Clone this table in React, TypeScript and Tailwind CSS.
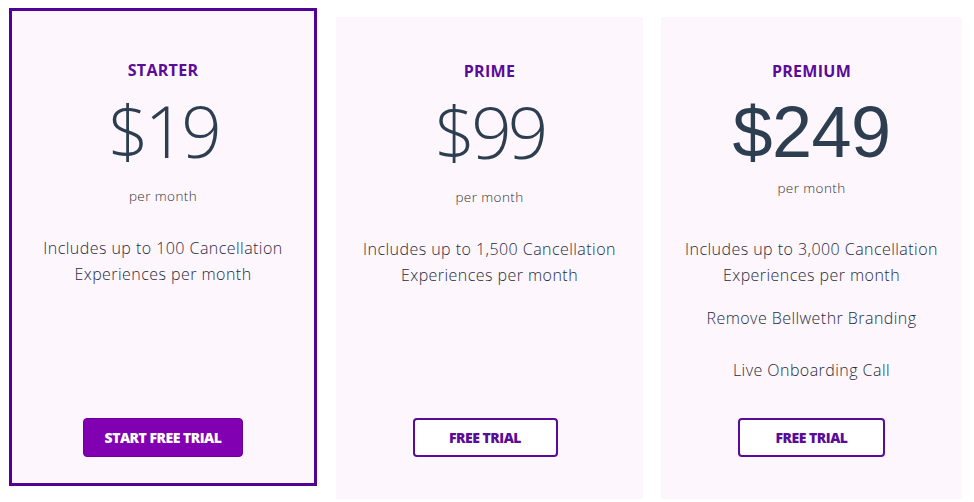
const features = {
  starter: ["Includes up to 100 Cancellation", "Experiences per month"],
  prime: ["Includes up to 1,500 Cancellation", "Experiences per month"],
  premium: ["Includes up to 3,000 Cancellation", "Experiences per month"],
};

function Title({ children }: { children: string }) {
  return (
    <h3 className="text-[16px] leading-[20px] font-bold tracking-[0.3px] text-[#5a0b97] uppercase">
      {children}
    </h3>
  );
}

function Price({ value, className = "" }: { value: string; className?: string }) {
  return (
    <div className={`text-[71px] leading-[80px] font-light text-[#2c3e50] tracking-[-4px] ${className}`}>
      {value}
    </div>
  );
}

function Lines({ lines }: { lines: string[] }) {
  return (
    <p className="text-[16px] leading-[26px] font-light tracking-[0.45px] text-[#1f2b3c]">
      {lines.map((l) => (
        <span key={l} className="block">
          {l}
        </span>
      ))}
    </p>
  );
}

function PerMonth({ className = "" }: { className?: string }) {
  return (
    <div className={`text-[13.5px] leading-[18px] font-light tracking-[0.4px] text-[#333333] ${className}`}>
      per month
    </div>
  );
}

export default function App() {
  return (
    <div
      className="w-[974px] h-[502px] bg-white flex items-start pl-[9px] pt-[8px] overflow-hidden"
      style={{ fontFamily: '"Open Sans", Lato, "Liberation Sans", sans-serif' }}
    >
      {/* Starter - highlighted */}
      <div className="w-[308px] h-[478px] border-[3px] border-[#520095] bg-[#fdf7fd] flex flex-col items-center text-center pt-[49px] pb-[26px]">
        <Title>Starter</Title>
        <Price value="$19" className="mt-[11px]" />
        <PerMonth className="mt-[16px]" />
        <div className="mt-[30px]">
          <Lines lines={features.starter} />
        </div>
        <button className="mt-auto w-[160px] h-[39px] rounded-[4px] bg-[#8000b2] border border-[#6a0096] text-white text-[14px] font-extrabold uppercase tracking-[-0.5px]">
          Start Free Trial
        </button>
      </div>

      {/* Prime */}
      <div className="ml-[19px] mt-[9px] w-[307px] h-[482px] bg-[#fdf7fd] flex flex-col items-center text-center pt-[44px] pb-[42px]">
        <Title>Prime</Title>
        <Price value="$99" className="mt-[11px]" />
        <PerMonth className="mt-[16px]" />
        <div className="mt-[30px]">
          <Lines lines={features.prime} />
        </div>
        <button className="mt-auto mr-[9px] w-[145px] h-[39px] rounded-[4px] bg-white border-2 border-[#5a0b97] text-[#5a0b97] text-[14px] font-extrabold uppercase tracking-[-0.5px]">
          Free Trial
        </button>
      </div>

      {/* Premium */}
      <div className="ml-[18px] mt-[9px] w-[301px] h-[482px] bg-[#fdf7fd] flex flex-col items-center text-center pt-[44px] pb-[42px]">
        <Title>Premium</Title>
        <div
          className="mt-[11px] text-[72px] leading-[80px] text-[#2c3e50] tracking-[-0.5px]"
          style={{ fontFamily: '"Liberation Sans", Arial, sans-serif' }}
        >
          $249
        </div>
        <PerMonth className="mt-[7px]" />
        <div className="mt-[39px]">
          <Lines lines={features.premium} />
        </div>
        <p className="mt-[17px] text-[16px] leading-[26px] font-light tracking-[0.45px] text-[#1f2b3c]">Remove Bellwethr Branding</p>
        <p className="mt-[26px] text-[16px] leading-[26px] font-light tracking-[0.45px] text-[#1f2b3c]">Live Onboarding Call</p>
        <button className="mt-auto w-[147px] h-[39px] rounded-[4px] bg-white border-2 border-[#5a0b97] text-[#5a0b97] text-[14px] font-extrabold uppercase tracking-[-0.5px]">
          Free Trial
        </button>
      </div>
    </div>
  );
}
